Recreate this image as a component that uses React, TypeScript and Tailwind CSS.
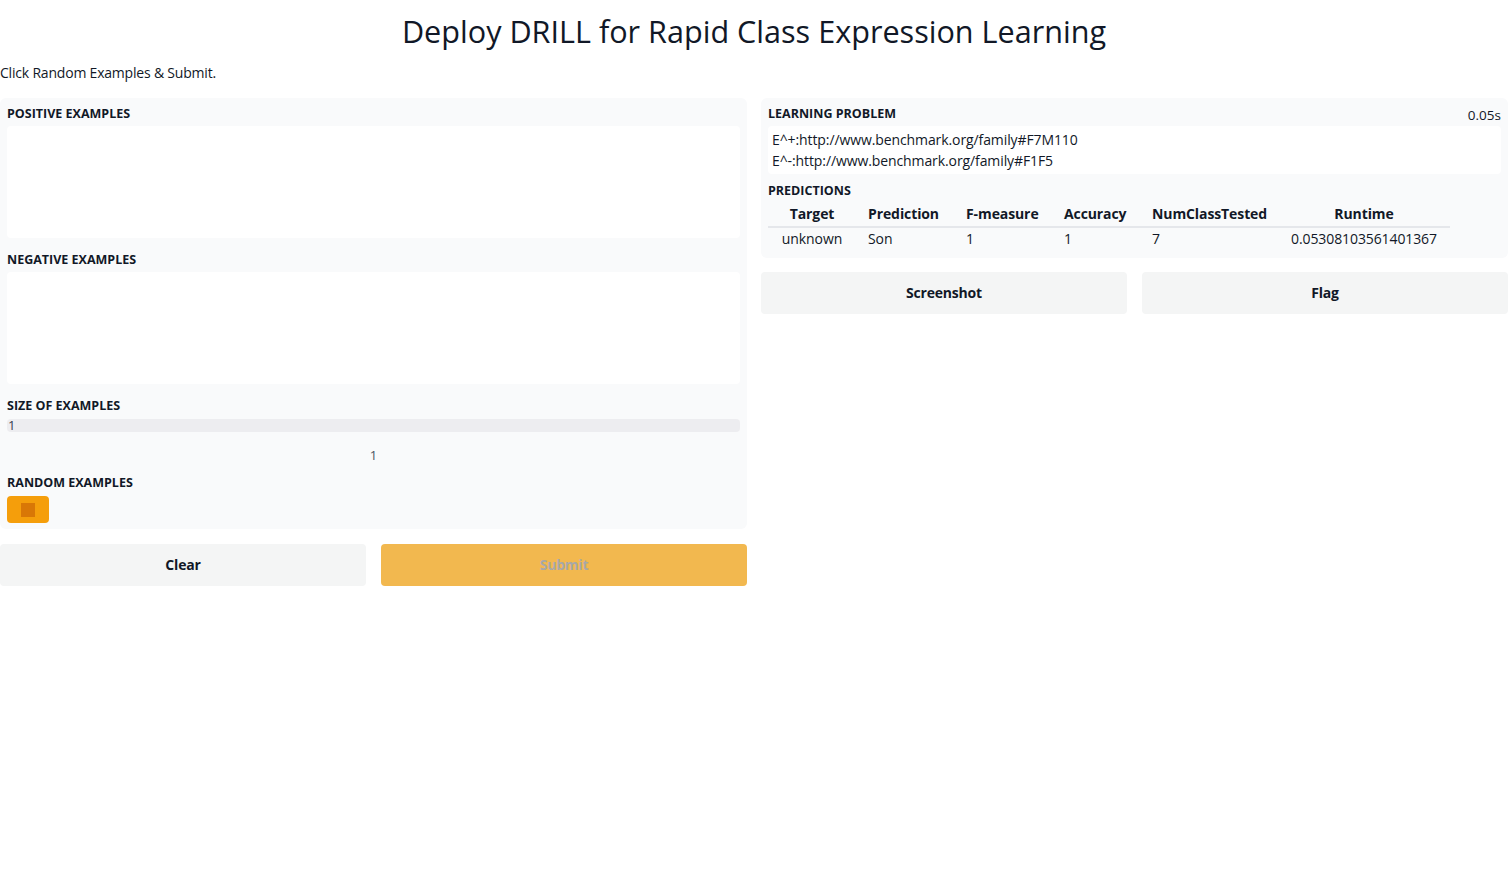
import React from "react";

const font = { fontFamily: '"Open Sans", "Noto Sans", sans-serif' };

function Label({ children }: { children: React.ReactNode }) {
  return <div className="text-[12.5px] font-bold uppercase leading-[14px] pt-[2px] text-[#111827]">{children}</div>;
}

export default function App() {
  const headers = ["Target", "Prediction", "F-measure", "Accuracy", "NumClassTested", "Runtime"];
  const row = ["unknown", "Son", "1", "1", "7", "0.05308103561401367"];
  const colCls = [
    "w-[88px] text-center",
    "w-[98px] text-left pl-[12px]",
    "w-[98px] text-left pl-[12px]",
    "w-[88px] text-left pl-[12px]",
    "w-[138px] text-left pl-[12px]",
    "w-[172px] text-center",
  ];
  return (
    <div className="w-[1508px] h-[885px] bg-white text-[#111827]" style={font}>
      <h1 className="text-center text-[30.6px] leading-[40px] pt-[11px] font-normal">Deploy DRILL for Rapid Class Expression Learning</h1>
      <p className="text-[14px] leading-[20px] mt-[12px] tracking-[-0.2px]">Click Random Examples &amp; Submit.</p>
      <div className="flex gap-[14px] mt-[15px]">
        <div className="w-[747px] flex flex-col gap-[15px]">
          <div className="bg-[#f9fafb] rounded-[6px] px-[7px] pt-[7px] pb-[6px] flex flex-col">
            <Label>POSITIVE EXAMPLES</Label>
            <div className="bg-white rounded-[4px] h-[112px] mt-[5px]" />
            <div className="mt-[13px]"><Label>NEGATIVE EXAMPLES</Label></div>
            <div className="bg-white rounded-[4px] h-[112px] mt-[5px]" />
            <div className="mt-[13px]"><Label>SIZE OF EXAMPLES</Label></div>
            <div className="bg-[#ededf0] rounded-[4px] h-[13px] mt-[6px] text-[13px] leading-[13px] text-[#374151] pl-[1px]">1</div>
            <div className="text-center text-[13px] leading-[16px] text-[#4b5563] mt-[15px]">1</div>
            <div className="mt-[11px]"><Label>RANDOM EXAMPLES</Label></div>
            <div className="mt-[6px] w-[42px] h-[27px] rounded-[4px] bg-[#f59e0b] flex items-center justify-center">
              <div className="w-[14px] h-[14px] bg-[#d97706]" />
            </div>
          </div>
          <div className="flex gap-[15px]">
            <button className="flex-1 h-[42px] pb-[2px] rounded-[4px] bg-[#f4f5f5] text-[14px] font-bold tracking-[-0.2px]">Clear</button>
            <button className="flex-1 h-[42px] pb-[2px] rounded-[4px] bg-[#f2b84f] text-[14px] font-bold text-[#a8a8a8] tracking-[-0.2px]">Submit</button>
          </div>
        </div>
        <div className="w-[747px] flex flex-col gap-[14px]">
          <div className="bg-[#f9fafb] rounded-[6px] px-[7px] pt-[7px] pb-[7px] flex flex-col">
            <div className="flex justify-between items-start h-[16px]">
              <Label>LEARNING PROBLEM</Label>
              <div className="text-[13.5px] leading-[18px] text-[#111827] mt-[1px]">0.05s</div>
            </div>
            <div className="bg-white rounded-[4px] mt-[5px] h-[48px] px-[4px] pt-[3px] text-[14px] leading-[21px] tracking-[-0.1px]">
              <div>E^+:http://www.benchmark.org/family#F7M110</div>
              <div>E^-:http://www.benchmark.org/family#F1F5</div>
            </div>
            <div className="mt-[8px]"><Label>PREDICTIONS</Label></div>
            <table className="mt-[4px] w-[682px] text-[14px] tracking-[-0.1px] border-collapse table-fixed">
              <thead>
                <tr className="border-b-2 border-[#e5e7eb]">
                  {headers.map((h, i) => (
                    <th key={h} className={`font-bold leading-[23px] pb-[1px] ${colCls[i]}`}>{h}</th>
                  ))}
                </tr>
              </thead>
              <tbody>
                <tr>
                  {row.map((c, i) => (
                    <td key={i} className={`leading-[21px] pb-[2px] ${colCls[i]}`}>{c}</td>
                  ))}
                </tr>
              </tbody>
            </table>
          </div>
          <div className="flex gap-[15px]">
            <button className="flex-1 h-[42px] pb-[2px] rounded-[4px] bg-[#f4f5f5] text-[14px] font-bold tracking-[-0.2px]">Screenshot</button>
            <button className="flex-1 h-[42px] pb-[2px] rounded-[4px] bg-[#f4f5f5] text-[14px] font-bold tracking-[-0.2px]">Flag</button>
          </div>
        </div>
      </div>
    </div>
  );
}
